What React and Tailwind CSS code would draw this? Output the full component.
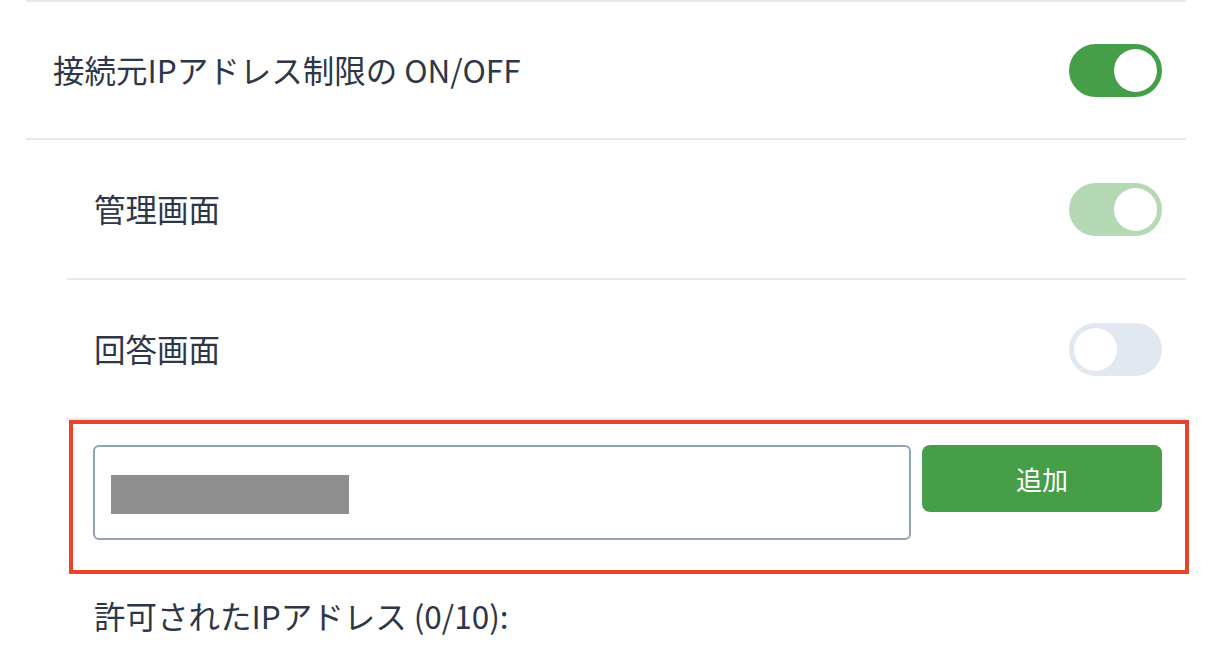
import React, { useState } from "react";

const Toggle = ({ on, disabled, onChange }) => {
  const track = on
    ? disabled
      ? "bg-[#b5d8b5]"
      : "bg-[#479e48]"
    : "bg-[#e2e8f0]";
  return (
    <button
      type="button"
      onClick={onChange}
      className={`w-[93px] h-[53px] rounded-full p-[5px] flex ${track} ${
        on ? "justify-end" : "justify-start"
      }`}
    >
      <span className="w-[43px] h-[43px] rounded-full bg-white block" />
    </button>
  );
};

const Row = ({ label, children, className = "" }) => (
  <div
    className={`h-[140px] flex items-center justify-between pl-[27px] pr-[24px] border-b-2 border-[#e5e9ef] ${className}`}
  >
    <span className="text-[31.5px] text-[#2d3748]">{label}</span>
    {children}
  </div>
);

export default function App() {
  const [enabled, setEnabled] = useState(true);
  const [admin, setAdmin] = useState(true);
  const [answer, setAnswer] = useState(false);
  const [ip, setIp] = useState("");

  return (
    <div
      className="w-[1214px] h-[650px] bg-white overflow-hidden pl-[26px] pr-[28px]"
      style={{ fontFamily: '"Noto Sans CJK JP", "Noto Sans", sans-serif' }}
    >
      <Row label="接続元IPアドレス制限の ON/OFF" className="border-t-2">
        <Toggle on={enabled} onChange={() => setEnabled(!enabled)} />
      </Row>

      <div className="pl-[41px]">
        <Row label="管理画面">
          <Toggle on={admin} disabled onChange={() => setAdmin(!admin)} />
        </Row>
        <Row label="回答画面">
          <Toggle on={answer} onChange={() => setAnswer(!answer)} />
        </Row>

        {/* IP input */}
        <div className="ml-[2px] mr-[-3px] border-4 border-[#e8432b] pt-[21px] pb-[30px] pl-[20px] pr-[23px] flex items-start gap-[11px]">
          <div className="relative flex-1 h-[95px] rounded-md border-2 border-[#94a3b8]">
            <span className="absolute left-[16px] top-[28px] w-[238px] h-[39px] bg-[#8f8f8f]" />
            <input
              value={ip}
              onChange={(e) => setIp(e.target.value)}
              className="w-full h-full bg-transparent outline-none px-4 text-[24px]"
            />
          </div>
          <button className="w-[240px] h-[67px] rounded-lg bg-[#479e48] text-white text-[26px]">
            追加
          </button>
        </div>

        <p className="mt-[18px] pl-[27px] text-[31.5px] text-[#2d3748]">
          許可されたIPアドレス (0/10):
        </p>
      </div>
    </div>
  );
}
